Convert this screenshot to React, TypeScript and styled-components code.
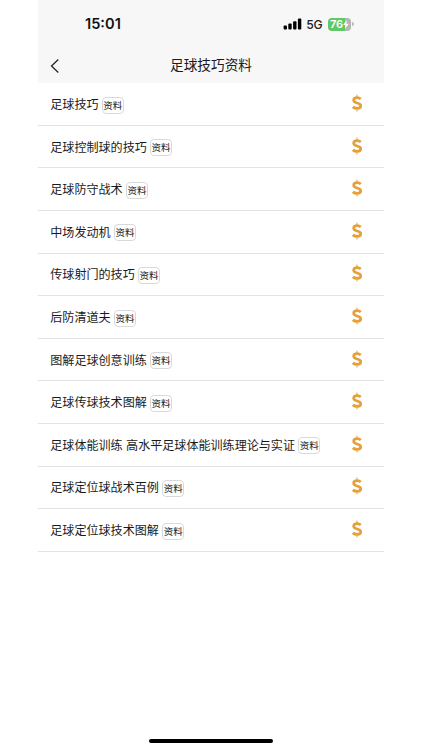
import React from 'react';
import styled, { createGlobalStyle } from 'styled-components';

const GlobalStyle = createGlobalStyle`
  * { box-sizing: border-box; }
  body {
    margin: 0;
    background: #fff;
    color: #1a1a1a;
    font-family: Inter, "Noto Sans CJK SC", sans-serif;
  }
`;

const Screen = styled.div`
  display: flex;
  flex-direction: column;
  width: 346px;
  height: 750px;
  margin-left: 38px;
  background: #fff;
  overflow: hidden;
`;

const Header = styled.header`
  flex: none;
  height: 83px;
  background: #f7f7f7;
`;

const StatusBar = styled.div`
  display: flex;
  align-items: center;
  justify-content: space-between;
  height: 48px;
  padding: 0 30.5px 0 47px;
`;

const Clock = styled.span`
  font-size: 14.6px;
  font-weight: 600;
  line-height: 20px;
  color: #111;
`;

const Indicators = styled.div`
  display: flex;
  align-items: center;
`;

const Network = styled.span`
  margin: 1px 5.5px 0 4.5px;
  font-size: 12.2px;
  font-weight: 500;
  letter-spacing: -0.2px;
  line-height: 16px;
  color: #222;
`;

const Battery = styled.div`
  display: flex;
  align-items: center;
  justify-content: center;
  width: 23px;
  height: 13px;
  border-radius: 4px;
  background: linear-gradient(90deg, #62c766 76%, #b4b6b4 76%);
  color: #fff;
  font-size: 11px;
  font-weight: 600;
  letter-spacing: -0.2px;
  line-height: 13px;
`;

const BatteryTip = styled.span`
  width: 1.5px;
  height: 4px;
  margin-left: 1px;
  border-radius: 0 2px 2px 0;
  background: #b8b8b8;
`;

const NavBar = styled.div`
  display: grid;
  grid-template-columns: 40px 1fr 40px;
  align-items: center;
  height: 35px;
`;

const BackButton = styled.button`
  display: flex;
  padding: 0 0 0 12px;
  border: 0;
  background: none;
`;

const Title = styled.h1`
  margin: 0 0 2px;
  font-size: 13.65px;
  font-weight: 400;
  line-height: 20px;
  text-align: center;
`;

const List = styled.ul`
  flex: 1;
  margin: 0;
  padding: 0.3px 0 0;
  list-style: none;
`;

const Row = styled.li`
  display: flex;
  align-items: center;
  height: 42.6px;
  padding: 0 21px 0 12.3px;
  border-bottom: 1px solid #e3e3e3;
`;

const Name = styled.span`
  margin-top: 2px;
  font-size: 12.07px;
  line-height: 18px;
  white-space: pre;
`;

const Tag = styled.span`
  display: flex;
  align-items: center;
  justify-content: center;
  width: 22px;
  height: 17px;
  margin: 2px auto 0 3.3px;
  border: 1px solid #d9d9d9;
  border-radius: 4px;
  font-size: 9.5px;
  line-height: 15px;
  white-space: nowrap;
`;

const HomeArea = styled.footer`
  display: flex;
  justify-content: center;
  height: 11px;
`;

const HomeIndicator = styled.div`
  width: 124px;
  height: 4px;
  border-radius: 2px;
  background: #000;
`;

const DollarSvg = styled.svg`
  flex: none;
  margin-bottom: 2px;
`;

const SignalIcon = () => (
  <svg width="19" height="12" viewBox="0 0 19 12" fill="#000">
    <rect x="0.6" y="7.4" width="3.4" height="4" rx="1" />
    <rect x="5.3" y="5.6" width="3.4" height="5.8" rx="1" />
    <rect x="10.1" y="3.2" width="3.4" height="8.2" rx="1" />
    <rect x="14.9" y="0.6" width="3.4" height="10.8" rx="1" />
  </svg>
);

const BoltIcon = () => (
  <svg width="6" height="9" viewBox="0 0 6 9" fill="#fff">
    <path d="M3.6 0 0.2 5h2.2L2 9l3.8-5.3H3.4Z" />
  </svg>
);

const BackIcon = () => (
  <svg width="10" height="16" viewBox="0 0 10 16" fill="none" stroke="#222" strokeWidth="1.25">
    <path d="M8.3 1.5 1.5 8l6.8 6.5" />
  </svg>
);

const DollarIcon = () => (
  <DollarSvg width="12" height="18" viewBox="0 0 12 18" fill="none" stroke="#e6a03a">
    <path d="M6 .6v2.4M6 15v2.4" strokeWidth="1.6" opacity="0.6" />
    <path
      d="M9.8 5C8.9 4.2 7.6 3.7 6.2 3.7 4.2 3.7 2.7 4.7 2.7 6.3c0 1.8 1.6 2.2 3.5 2.7 2.1.5 3.5 1.1 3.5 2.8 0 1.6-1.5 2.6-3.5 2.6-1.9 0-3.3-.5-4.4-1.5"
      strokeWidth="2.8"
    />
  </DollarSvg>
);

const items = [
  '足球技巧',
  '足球控制球的技巧',
  '足球防守战术',
  '中场发动机',
  '传球射门的技巧',
  '后防清道夫',
  '图解足球创意训练',
  '足球传球技术图解',
  '足球体能训练 高水平足球体能训练理论与实证',
  '足球定位球战术百例',
  '足球定位球技术图解',
];

export default function App() {
  return (
    <>
      <GlobalStyle />
      <Screen>
        <Header>
          <StatusBar>
            <Clock>15:01</Clock>
            <Indicators>
              <SignalIcon />
              <Network>5G</Network>
              <Battery>
                76
                <BoltIcon />
              </Battery>
              <BatteryTip />
            </Indicators>
          </StatusBar>
          <NavBar>
            <BackButton aria-label="返回">
              <BackIcon />
            </BackButton>
            <Title>足球技巧资料</Title>
          </NavBar>
        </Header>
        <List>
          {items.map((item) => (
            <Row key={item}>
              <Name>{item}</Name>
              <Tag>资料</Tag>
              <DollarIcon />
            </Row>
          ))}
        </List>
        <HomeArea>
          <HomeIndicator />
        </HomeArea>
      </Screen>
    </>
  );
}
